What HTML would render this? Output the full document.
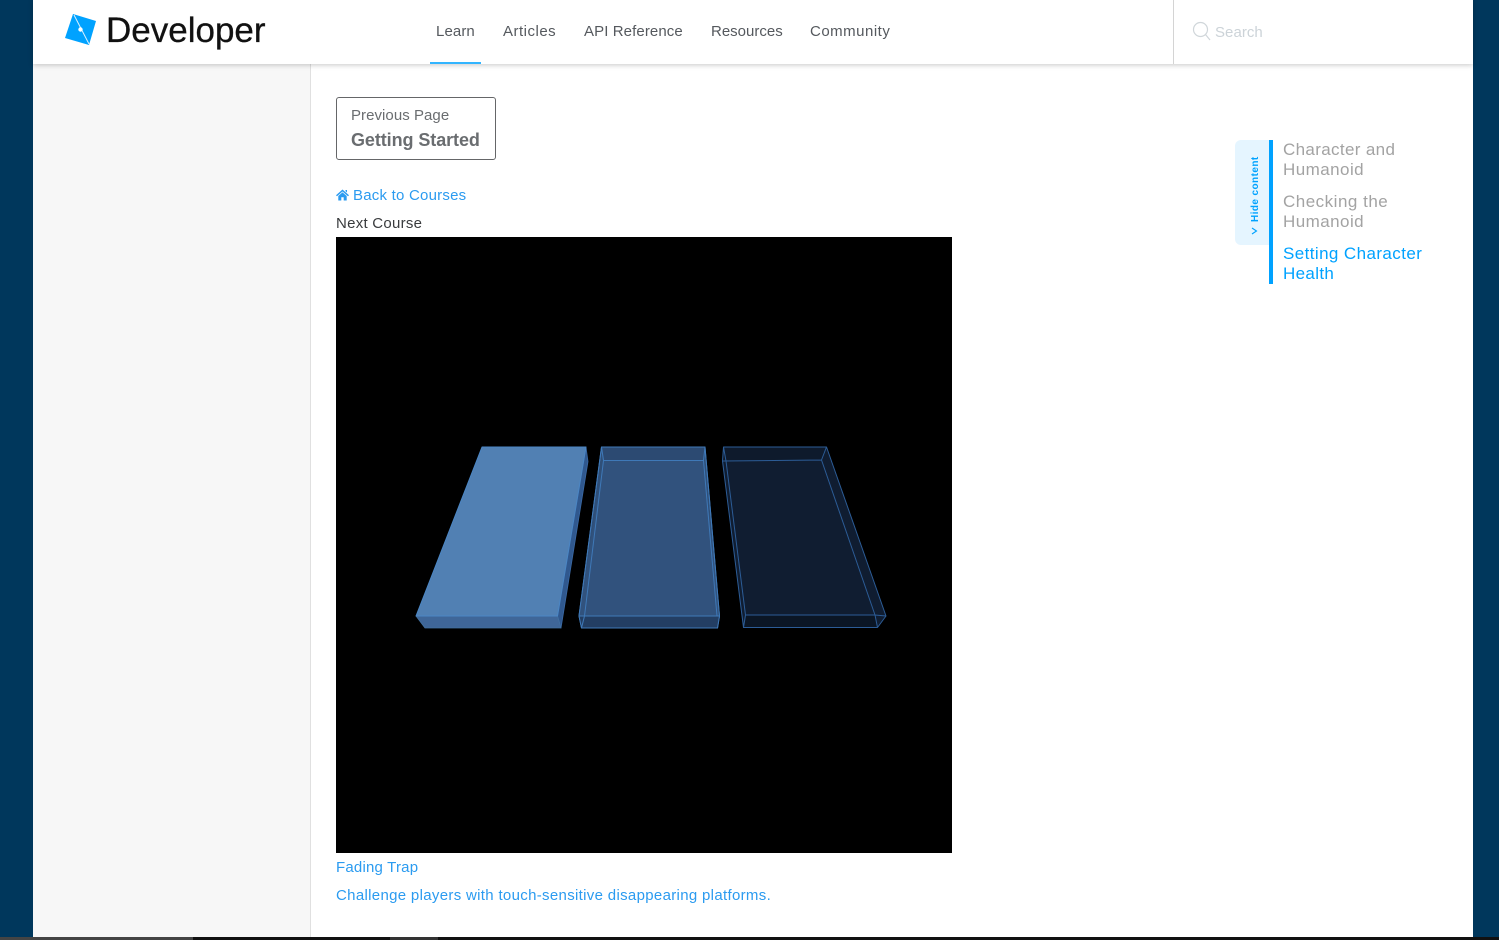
<!DOCTYPE html>
<html><head><meta charset="utf-8"><style>
html,body{margin:0;padding:0;width:1499px;height:940px;overflow:hidden;background:#00375c;font-family:"Liberation Sans",sans-serif}
.a{position:absolute;white-space:nowrap}
.t{position:absolute;white-space:nowrap;font-size:15px;line-height:20px}
</style></head><body>
<div class="a" style="left:33px;top:0;width:1440px;height:940px;background:#fff"></div>
<div class="a" style="left:33px;top:64px;width:277px;height:876px;background:#f7f7f7;border-right:1px solid #e0e0e0"></div>
<div class="a" style="left:33px;top:0;width:1440px;height:64px;background:#fff;box-shadow:0 1px 5px rgba(0,0,0,.22)"></div>
<div class="a" style="left:1173px;top:0;width:1px;height:64px;background:#d4d4d4"></div>

<svg class="a" style="left:64px;top:13px" width="34" height="33" viewBox="0 0 34 33"><polygon points="9,1 32,8 25,32 1,25" fill="#00a2ff"/><line x1="10" y1="2" x2="25" y2="31" stroke="#d8f0ff" stroke-width="1"/><circle cx="16.500" cy="16.500" r="2.200" fill="#fff"/></svg>
<div class="t" style="left:106px;top:11px;font-size:35px;line-height:40px;color:#111;-webkit-text-stroke:.3px #111">Developer</div>

<div class="t" style="left:436px;top:22px;color:#55595e;letter-spacing:.1px">Learn</div>
<div class="t" style="left:503px;top:22px;color:#55595e;letter-spacing:.5px">Articles</div>
<div class="t" style="left:584px;top:22px;color:#55595e;letter-spacing:.1px">API Reference</div>
<div class="t" style="left:711px;top:22px;color:#55595e;letter-spacing:0">Resources</div>
<div class="t" style="left:810px;top:22px;color:#55595e;letter-spacing:.5px">Community</div>
<div class="a" style="left:430px;top:62px;width:51px;height:2px;background:#33b5ff"></div>

<svg class="a" style="left:1192px;top:21px" width="20" height="20" viewBox="0 0 20 20" fill="none" stroke="#d0d6da" stroke-width="1.200"><circle cx="8.500" cy="8.500" r="7"/><line x1="13.500" y1="13.500" x2="18" y2="19"/></svg>
<div class="t" style="left:1215px;top:23px;color:#ccd3d8;letter-spacing:.05px">Search</div>

<div class="a" style="left:336px;top:97px;width:158px;height:61px;border:1px solid #656668;border-radius:3px"></div>
<div class="t" style="left:351px;top:106px;color:#6a6d70;letter-spacing:.05px">Previous Page</div>
<div class="t" style="left:351px;top:130px;font-size:18px;font-weight:bold;color:#6a6d70;letter-spacing:-.08px">Getting Started</div>

<svg class="a" style="left:336px;top:189px" width="13" height="12" viewBox="0 0 13 12"><path d="M6.500 .5 L13 6.300 L12 7.300 L6.500 2.500 L1 7.300 L0 6.300 Z M2.300 7 L6.500 3.400 L10.700 7 V11.500 H7.700 V8.300 H5.300 V11.500 H2.300 Z M9.500 1 H11 V3.500 L9.500 2.300 Z" fill="#2b9bf0"/></svg>
<div class="t" style="left:353px;top:186px;color:#2b9bf0;letter-spacing:.22px">Back to Courses</div>
<div class="t" style="left:336px;top:214px;color:#393b3d;letter-spacing:.26px">Next Course</div>

<svg class="a" style="left:336px;top:237px" width="616" height="616" viewBox="336 237 616 616">
<rect x="336" y="237" width="616" height="616" fill="#000"/>
<g stroke-linejoin="round">
<polygon points="557.500,616 586,447 588,461.500 561,628" fill="#30588e" stroke="#3a69a5" stroke-width=".8"/>
<polygon points="416,616 557.500,616 561,628 425,628" fill="#3f6698" stroke="#42709f" stroke-width=".8"/>
<polygon points="482,447 586,447 557.500,616 416,616" fill="#5180b3" stroke="#4b86c4" stroke-width="1"/>

<polygon points="601.500,447 705,447 719.500,616 717.500,628 581.500,628 579,616" fill="#2f4f78" stroke="#3f79b8" stroke-width="1"/>
<polygon points="603.500,460.500 703.500,460.500 719.500,616 579,616" fill="#31527d"/>
<polygon points="601.500,447 705,447 703.500,460.500 603.500,460.500" fill="#2c4a72"/>
<polygon points="579,616 719.500,616 717.500,628 581.500,628" fill="#233e63"/>
<path d="M601.500 447H705L719.500 616L717.500 628H581.500L579 616ZM603.500 460.500H703.500M601.500 447L603.500 460.500L584.500 616M705 447L703.500 460.500L717 616M579 616H719.500M584.500 616L581.500 628" fill="none" stroke="#3f79b8" stroke-width="1"/>

<polygon points="723.500,447 826.500,447 886,616 877.500,627.500 743.500,627.500 722.500,461" fill="#101d31"/>
<polygon points="723.500,447 826.500,447 821.500,460 722.500,461" fill="#0e1a2c"/>
<polygon points="745.500,615 875,615 877.500,627.500 743.500,627.500" fill="#0b1625"/>
<path d="M723.500 447H826.500L886 616L877.500 627.500H743.500L722.500 461ZM722.500 461L821.500 460L826.500 447M821.500 460L875 615L877.500 627.500M723.500 447L726 461L745.500 615L743.500 627.500M745.500 615H875L886 616" fill="none" stroke="#2c5c96" stroke-width="1"/>
</g></svg>

<div class="t" style="left:336px;top:858px;color:#2b9bf0;letter-spacing:.2px">Fading Trap</div>
<div class="t" style="left:336px;top:886px;color:#2b9bf0;letter-spacing:.32px">Challenge players with touch-sensitive disappearing platforms.</div>

<div class="a" style="left:1235px;top:140px;width:34px;height:105px;background:#e5f5ff;border-radius:6px 0 0 6px"></div>
<div class="a" style="left:1269px;top:140px;width:4px;height:144px;background:#00a2ff"></div>
<div class="a" style="left:1256px;top:222px;transform:rotate(-90deg);transform-origin:0 0;font-size:10px;line-height:12px;margin-left:-6px;font-weight:bold;color:#00a2ff;letter-spacing:.42px">Hide content</div>
<svg class="a" style="left:1251px;top:227px" width="7" height="8" viewBox="0 0 7 8" fill="none" stroke="#00a2ff" stroke-width="1.100"><path d="M1 1L5.500 4L1 7"/></svg>

<div class="t" style="left:1283px;top:140px;font-size:17px;color:#a3a3a3;letter-spacing:.35px">Character and</div>
<div class="t" style="left:1283px;top:160px;font-size:17px;color:#a3a3a3;letter-spacing:.45px">Humanoid</div>
<div class="t" style="left:1283px;top:192px;font-size:17px;color:#a3a3a3;letter-spacing:.5px">Checking the</div>
<div class="t" style="left:1283px;top:212px;font-size:17px;color:#a3a3a3;letter-spacing:.45px">Humanoid</div>
<div class="t" style="left:1283px;top:244px;font-size:17px;color:#00a2ff;letter-spacing:.41px">Setting Character</div>
<div class="t" style="left:1283px;top:264px;font-size:17px;color:#00a2ff;letter-spacing:.35px">Health</div>

<div class="a" style="left:0;top:937px;width:1499px;height:3px;background:#111"></div>
<div class="a" style="left:0;top:937px;width:193px;height:3px;background:#444"></div>
<div class="a" style="left:390px;top:937px;width:48px;height:3px;background:#333"></div>
</body></html>
